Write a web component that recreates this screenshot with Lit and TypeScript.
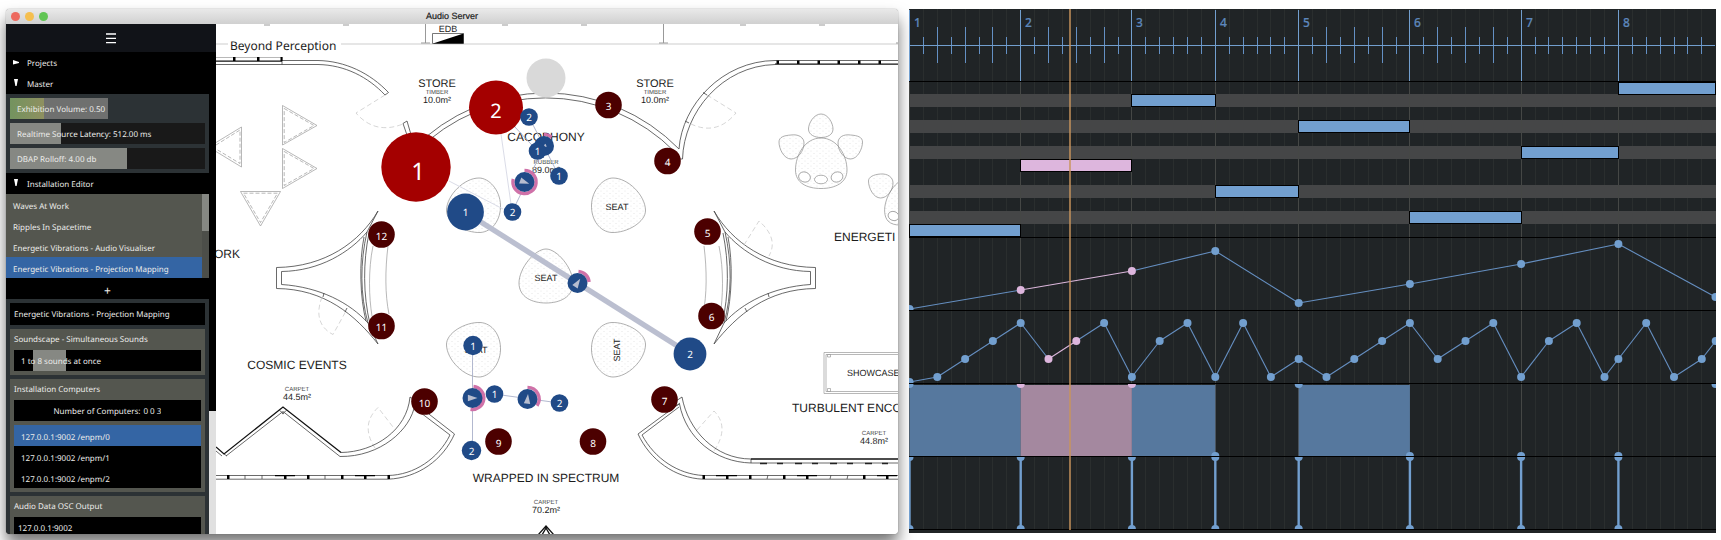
import { LitElement, html, svg, css } from "lit";
import { customElement } from "lit/decorators.js";

/* ---------- side panel ---------- */

@customElement("side-panel")
class SidePanel extends LitElement {
  static styles = css`
    :host {
      display: flex;
      flex-direction: column;
      flex: 0 0 210px;
      min-height: 0;
      background: #000;
      color: #ececea;
      font: 8px/21px "Noto Sans", sans-serif;
      text-rendering: geometricPrecision;
      overflow: hidden;
    }
    * { box-sizing: border-box; }
    button, input { font: inherit; color: inherit; text-rendering: inherit; border: 0; margin: 0; padding: 0; background: none; }
    button { display: block; text-align: left; cursor: pointer; }
    ul { list-style: none; margin: 0; padding: 0; }
    .menu { height: 28px; flex: none; background: #111318; display: grid; place-items: center; width: 100%; }
    .body { display: flex; flex: 1; min-height: 0; }
    .scroll { flex: 1; min-width: 0; overflow: hidden; }
    .rail { width: 7px; display: grid; grid-template-rows: 359fr 123fr; }
    .rail-rest { background: #e0e0e0; }
    .section { width: 100%; height: 21px; display: flex; align-items: center; gap: 8px; padding: 2px 0 0 6px; }
    .section svg { flex: none; margin-bottom: 2px; }
    .panel { background: #2c3235; padding: 4px; display: grid; gap: 4px; }
    .slider { display: grid; height: 21px; }
    .slider > * { grid-area: 1 / 1; }
    .slider input { appearance: none; width: 100%; height: 21px; cursor: pointer;
      background: linear-gradient(90deg, transparent var(--from), #868883 var(--from), #868883 var(--to), transparent var(--to)) #191919; }
    .slider input::-webkit-slider-thumb { appearance: none; width: 1px; height: 21px; }
    .slider span { z-index: 1; padding: 1px 0 0 7px; line-height: 22px; white-space: nowrap; pointer-events: none; }
    .slider.black input { background-color: #000; }
    .slider.level { width: 50%; }
    .slider.level input { background: linear-gradient(90deg, #73935f, #8f9060 35%, #6f706f 35%); }
    .list { display: flex; background: #54564f; }
    .list ul { flex: 1; }
    .list button { width: 100%; height: 21px; padding: 2px 0 0 7px; }
    .track { width: 7px; background: #4c4e49; }
    .thumb { height: 37px; background: #868883; }
    button.on { background: #3465a4; }
    .add { width: 100%; height: 21px; text-align: center; font-size: 12px; padding: 2px 0 0; }
    .field { display: block; width: 100%; height: 22px; background: #000; padding-left: 4px; }
    .group { background: #54564f; padding: 0 4px 4px; }
    .group h3 { margin: 0; font: inherit; height: 21px; }
    .number { display: flex; justify-content: center; gap: 3px; height: 21px; background: #000; margin-bottom: 4px; line-height: 23px; }
    .number input { width: 18px; height: 23px; }
    .hosts { background: #000; }
    .hosts button { width: 100%; height: 21px; padding: 2px 0 0 7px; }
  `;

  slider(text: string, to: number, from = 0, kind = "") {
    return html`<label class="slider ${kind}">
      <input type="range" min="0" max="100" .value=${String(to)} style="--from:${from}%;--to:${to}%" />
      <span>${text}</span>
    </label>`;
  }

  section(text: string, open: boolean) {
    return html`<button class="section" aria-expanded=${open ? "true" : "false"}>
      <svg width="7" height="9" viewBox="0 0 7 9" fill="#fff">
        <path d=${open ? "M2 0H6L4.6 7H3.4Z" : "M1 2L7 4V5L1 6.5Z"} />
      </svg>${text}</button>`;
  }

  render() {
    const presets = ["Waves At Work", "Ripples In Spacetime", "Energetic Vibrations - Audio Visualiser", "Energetic Vibrations - Projection Mapping"];
    const hosts = ["127.0.0.1:9002 /enpm/0", "127.0.0.1:9002 /enpm/1", "127.0.0.1:9002 /enpm/2"];
    return html`
      <button class="menu" aria-label="Menu">
        <svg width="10" height="11" viewBox="0 0 10 11" stroke="#fff" stroke-width="1.3"><path d="M0 1H10M0 5.3H10M0 9.6H10" /></svg>
      </button>
      <div class="body">
        <div class="scroll">
          ${this.section("Projects", false)}
          ${this.section("Master", true)}
          <div class="panel">
            ${this.slider("Exhibition Volume: 0.50", 50, 0, "level")}
            ${this.slider("Realtime Source Latency: 512.00 ms", 26)}
            ${this.slider("DBAP Rolloff: 4.00 db", 60)}
          </div>
          ${this.section("Installation Editor", true)}
          <div class="list">
            <ul>${presets.map((p, i) => html`<li><button class=${i === 3 ? "on" : ""}>${p}</button></li>`)}</ul>
            <div class="track"><div class="thumb"></div></div>
          </div>
          <button class="add" aria-label="Add installation">+</button>
          <div class="panel">
            <input class="field" aria-label="Installation name" .value=${presets[3]} />
            <section class="group">
              <h3>Soundscape - Simultaneous Sounds</h3>
              ${this.slider("1 to 8 sounds at once", 28, 10, "black")}
            </section>
            <section class="group">
              <h3>Installation Computers</h3>
              <label class="number">Number of Computers: <input .value=${"0 0 3"} /></label>
              <ul class="hosts">${hosts.map((h, i) => html`<li><button class=${i === 0 ? "on" : ""}>${h}</button></li>`)}</ul>
            </section>
            <section class="group">
              <h3>Audio Data OSC Output</h3>
              <input class="field" aria-label="OSC output address" .value=${"127.0.0.1:9002"} />
            </section>
          </div>
        </div>
        <div class="rail"><div></div><div class="rail-rest"></div></div>
      </div>
    `;
  }
}

/* ---------- floor plan ---------- */

type Dot = [label: string, x: number, y: number, r: number];

@customElement("floor-plan")
class FloorPlan extends LitElement {
  static styles = css`
    :host { display: block; flex: 1; min-width: 0; background: #fff; overflow: hidden; }
    svg { display: block; width: 100%; height: 100%; text-rendering: geometricPrecision; }
    text { font-family: "Liberation Sans", Arial, sans-serif; fill: #1c1c1c; text-anchor: middle; }
    .room { font-size: 12px; }
    .store { font-size: 11px; }
    .area { font-size: 9px; }
    .floor { font-size: 6px; fill: #444; }
    .left { text-anchor: start; }
    .title { font: 12px "Noto Sans", sans-serif; text-anchor: start; }
    .wall { fill: none; stroke: #444; stroke-width: 0.8; }
    .pale { fill: none; stroke: #9a9a9a; stroke-width: 0.7; }
    .door { fill: none; stroke: #c4c4c4; stroke-width: 0.7; stroke-dasharray: 5 3; }
    .heavy { fill: none; stroke: #111; stroke-width: 1.3; }
    .seat { stroke: #8c8c8c; stroke-width: 0.7; fill: url(#dots); }
    .node { font: 10px "Noto Sans", sans-serif; fill: #fff; }
    .node.l { font-size: 20px; }
    .node.xl { font-size: 24px; }
    .red { fill: #a40000; }
    .speaker { fill: #4c0000; }
    .blue { fill: #204a87; }
    .pink { fill: none; stroke: #cf71a8; stroke-width: 3.4; }
    .aim { fill: #b7bdcf; }
    .link { fill: none; stroke: #a9b0c9; stroke-width: 0.9; }
    .faint { fill: none; stroke: #d6d8e4; stroke-width: 0.9; }
    .beam { stroke: #bbbfd0; stroke-width: 5.4; }
  `;

  dots(list: Dot[], kind: string) {
    const drop = kind === "speaker" ? 5 : 4;
    return list.map(([t, x, y, r]) => svg`<circle class=${kind} cx=${x} cy=${y} r=${r} /><text class="node" x=${x} y=${y + drop}>${t}</text>`);
  }

  /** A moving source: disc, level arc between two compass angles, heading arrow. */
  source(x: number, y: number, from: number, to: number, heading: number, size = 1) {
    const at = (deg: number) => {
      const a = ((deg - 90) * Math.PI) / 180;
      return `${(x + 11.6 * Math.cos(a)).toFixed(1)} ${(y + 11.6 * Math.sin(a)).toFixed(1)}`;
    };
    return svg`
      <path class="pink" d="M${at(from)}A11.6 11.6 0 ${to - from > 180 ? 1 : 0} 1 ${at(to)}" />
      <circle class="blue" cx=${x} cy=${y} r="10" />
      <path class="aim" d="M5 0L-4.6 3.2V-3.2Z" transform="translate(${x} ${y}) rotate(${heading}) scale(${size})" />`;
  }

  label(x: number, y: number, floor: string, area: string) {
    return svg`<text class="floor" x=${x} y=${y}>${floor}</text><text class="area" x=${x} y=${y + 9}>${area}</text>`;
  }

  wing() {
    return svg`
      <path class="wall" d="M378 211C360 242 325 267 276.500 267.500V288.500C325 289 355 315 378 344L368 323M378 211L367 232C350 252 320 271 281.500 271.500V284.500C320 287 350 303 368 323" />
      <path class="wall" d="M367 232C360 262 360 295 368 323M369 233C363 262 363 295 370 324M364 237C359 262 360 298 366 321M324 293L323 297M347 308L345 312" />
      <path class="pale" d="M373 246C368 270 369 298 372 316M388 246C385 270 385 295 389 314" />`;
  }

  render() {
    const corner = "M613 178C628 178 645 195 645.5 210C646 222 627 233 612 232.500C600 232 591 220 591.500 205C592 190 603 178 613 178Z";
    return html`<svg viewBox="216 24 682 510" preserveAspectRatio="xMinYMin slice" role="img" aria-label="Floor plan">
      <defs>
        <pattern id="dots" width="6" height="5" patternUnits="userSpaceOnUse">
          <circle cx="1" cy="1" r="0.5" fill="#ddd" /><circle cx="4" cy="3.500" r="0.5" fill="#ddd" />
        </pattern>
      </defs>

      <path d="M216 44H898" stroke="#e6e6e6" stroke-width="2" />
      <path stroke="#999" fill="none" d="M264 25H270M343 25H349M502 25H508M581 25H587M740 25H746M819 25H825M425.500 24V43M421 43H430M663.500 24V43M659 43H668M896 43H898" />
      <path d="M432.500 33.500H463.500V43.500H432.500Z" fill="#fff" stroke="#555" stroke-width="0.8" />
      <path d="M433 43.500L463.500 33.500V43.500Z" />
      <text class="area" x="448" y="32">EDB</text>
      <rect x="228" y="40" width="113" height="14" fill="#fff" />
      <text class="title" x="230" y="50">Beyond Perception</text>

      <path class="wall" d="M282 60.500H318C345 61 370 73 388.500 92.500L385 95C368 77 345 65 318 64.500H216M282 57V64.500" />
      <path class="pale" d="M216 57.500H282" />
      <path class="heavy" d="M216 61.200H282" />
      <path d="M233 57h2.500v4h-2.500zM257 57h2.500v4h-2.500zM280.500 57h2v4h-2zM776.500 60h2.500v4h-2.500zM797 60h2.500v4h-2.500zM817.500 60h2.500v4h-2.500zM837.500 60h2.500v4h-2.500zM858 60h2.500v4h-2.500zM878.500 60h2.500v4h-2.500z" />
      <path class="door" d="M385 95L356 113Q375 135 403 124M707 95L736 113Q716 137 689 123" />
      <path class="wall" d="M403 123.500L407 121L412 138M403 123.500L408 138" />
      <path class="wall" d="M413 149A186 186 0 0 1 679 149M416 152A182 182 0 0 1 675 152" />
      <path class="wall" d="M679 149C682 105 722 61 775 60.500H898M682.500 159C684 112 722 66 775 64.500M703 92.500L707 95M685 121L689 123M682.500 159L679 159" />
      <path class="heavy" d="M775 64.200H898" />

      <g class="pale">
        <path d="M216 142.500L241.500 127V167L216 151.500M282.500 105.500L317 125.500L282.500 145ZM282.500 148.500L317 168.500L282.500 188.500ZM240.500 191.500H280.500L260.500 226Z" />
        <path stroke-dasharray="4 2" d="M216 145L240 130V163.500L216 149M284.200 108.500L314 125.500L284.200 142.500ZM284.200 151.500L314 168.500L284.200 185.500ZM243.500 193.200H277.500L260.500 222.500Z" />
      </g>

      ${this.wing()}
      <g transform="translate(1092 0) scale(-1 1)">${this.wing()}</g>
      <path class="door" d="M322 297C315 315 320 328 333 334.500L346 311M744 245L759 221C775 235 774 247 769 256M375 448Q360 425 378 407.500L393 427M697 430L714 411Q730 427 714 451" />

      <path class="seat" d=${corner} />
      <path class="seat" d=${corner} transform="translate(1092 0) scale(-1 1)" />
      <path class="seat" d=${corner} transform="translate(0 555) scale(1 -1)" />
      <path class="seat" d=${corner} transform="translate(1092 555) scale(-1 -1)" />
      <path class="seat" d="M546 249C557 249 573 268 573 283C573 297 560 303 546 303C532 303 519 297 519 283C519 268 535 249 546 249Z" />

      <g class="seat">
        <path d="M821 138C837 138 847 155 847 170C847 183 835 188.500 821 188.500C807 188.500 795.500 183 795.500 170C795.500 155 805 138 821 138Z" />
        <path d="M821 114C828 114 833 123 833 129C833 135 827 137.500 821 137.500C815 137.500 808.500 135 808.500 129C808.500 123 814 114 821 114Z" />
        <path d="M791 135C798 134 804 137 804 143C804 151 798 159 791 159C784 159 779 149 779 142C779 137 784 135.500 791 135Z" />
        <path d="M850.500 135C843.500 134 838 137 838 143C838 151 844 159 850.500 159C857.500 159 862.500 149 862.500 142C862.500 137 857.500 135.500 850.500 135Z" />
        <path d="M880.500 174C887.500 173.500 893 177 893 183C893 190 887.500 198 880.500 198C873.500 198 868.500 188 868.500 181C868.500 177 873.500 174.500 880.500 174Z" />
        <path d="M900 181C887 190 880 212 888 221C891 224 895 225 900 225Z" />
        <g fill="#fff">
          <ellipse cx="804.500" cy="177" rx="6" ry="5" transform="rotate(20 804.500 177)" />
          <ellipse cx="821" cy="179.500" rx="6.500" ry="4.300" />
          <ellipse cx="837" cy="177" rx="6" ry="5" transform="rotate(-20 837 177)" />
          <ellipse cx="893.500" cy="216" rx="5.500" ry="4.500" transform="rotate(20 893.500 216)" />
        </g>
      </g>

      <path class="pale" d="M900 352.500H824V393.500H900M900 354.500H826V391.500H900M827.500 354.500h3v2.500h-3zM827.500 388.500h3v3h-3z" />

      <path class="heavy" d="M216 447L224 454L283 407L341 452.500" />
      <path class="wall" d="M216 451L222 456M226 456L283 411.500L340 456.500M224 454L227 456M279 410L284 414M287 410L282 414M341 452.500C375 452 407 430 410 397L413 399M340 456.500C380 457 411 430 415 404" />
      <path class="wall" d="M425 411L454.500 434C443 460 418 478 388 479.200H216M421 413L450 435C438 459 414 475 388 475.500H216" />
      <path d="M227 475h2.500v4h-2.500zM284 475h2.500v4h-2.500zM307 475h2.500v4h-2.500zM341 475h2.500v4h-2.500zM364 475h2.500v4h-2.500zM387.500 475h2.500v4h-2.500zM275 475h20v1.200h-20zM355 475h20v1.200h-20z" />
      <path class="wall" d="M245 475V479M262 475V479M325 475V479" />

      <path class="wall" d="M676 401L682 397C688 430 715 459 751 459M676 406L679.500 404C686 438 715 462 751 463H898M751 459V463" />
      <path class="heavy" d="M751 459H898" />
      <path class="wall" d="M680 403L638 434C650 460 675 478 703 479.200H898M679 407L642 435C655 459 678 474 703 475.500H898" />
      <path d="M702.500 475h2.500v4h-2.500zM726 475h2.500v4h-2.500zM749 475h2.500v4h-2.500zM783 475h2.500v4h-2.500zM806 475h2.500v4h-2.500zM863 475h2.500v4h-2.500zM886 475h2.500v4h-2.500zM716 475h21v1.200h-21zM797 475h20v1.200h-20zM877 475h20v1.200h-20z" />
      <path stroke="#222" stroke-width="1.500" stroke-dasharray="7 10 6 12" d="M760 463.500H898" />
      <path class="wall" d="M767 479L768 475M830 479L831 475M847 479L848 475" />
      <path class="heavy" d="M538 535L546 526L554 535M542 535L546 528L550 535" />

      <text class="store" x="437" y="87">STORE</text>${this.label(437, 94, "TIMBER", "10.0m²")}
      <text class="store" x="655" y="87">STORE</text>${this.label(655, 94, "TIMBER", "10.0m²")}
      <text class="room" x="546" y="141">CACOPHONY</text>${this.label(546, 164, "RUBBER", "89.0m²")}
      <text class="room left" x="214" y="258">ORK</text>
      <text class="room left" x="834" y="241">ENERGETI</text>
      <text class="room" x="297" y="369">COSMIC EVENTS</text>${this.label(297, 391, "CARPET", "44.5m²")}
      <text class="room" x="546" y="482">WRAPPED IN SPECTRUM</text>${this.label(546, 504, "CARPET", "70.2m²")}
      <text class="room left" x="792" y="412">TURBULENT ENCO</text>${this.label(874, 435, "CARPET", "44.8m²")}
      <text class="area left" x="847" y="376">SHOWCASE</text>
      <text class="area" x="617" y="210">SEAT</text>
      <text class="area" x="546" y="281">SEAT</text>
      <text class="area" x="476" y="353">SEAT</text>
      <text class="area" transform="translate(620 350) rotate(-90)">SEAT</text>

      <circle cx="546" cy="78" r="19.500" fill="#d9d9d9" />
      <path class="faint" d="M449 181L503 209M501 134L511 204" />
      <path class="link" d="M514 126L544 158M529 117L559 176M544 147L512 212M472.500 345V450M494 394L559.500 403" />
      <path class="beam" d="M465 212L690 354" />

      <circle class="red" cx="416" cy="167" r="34.700" /><text class="node xl" x="418" y="180">1</text>
      <circle class="red" cx="496" cy="107.500" r="27" /><text class="node l" x="496" y="118">2</text>
      ${this.dots([["3", 608.5, 105, 13.3], ["4", 667.5, 161, 13.3], ["5", 707.5, 231.5, 13.3], ["6", 711.5, 316, 13.3], ["7", 664.5, 399.5, 13.3], ["8", 593, 441.5, 13.3], ["9", 498.5, 441.5, 13.3], ["10", 424.5, 401.5, 13.3], ["11", 381.5, 326, 13.3], ["12", 381.5, 234.5, 13.3]], "speaker")}
      ${this.source(524.5, 182, 0, 285, 20)}
      ${this.source(544, 146, 0, 40, 160, 0.5)}
      ${this.source(577.5, 283, 5, 85, -57)}
      ${this.source(472.5, 398, 5, 190, 0)}
      ${this.source(527.5, 399, 0, 125, -84)}
      ${this.dots([["1", 465.5, 212, 18.4], ["2", 690, 354, 16.4], ["2", 529, 117, 8.8], ["1", 537.5, 151, 8.8], ["1", 559, 176, 8.8], ["2", 512.5, 212, 8.8], ["1", 473, 345.5, 9.7], ["2", 471.5, 450.5, 9.7], ["1", 494.5, 394, 8.8], ["2", 559.5, 403, 8.8]], "blue")}
    </svg>`;
  }
}

/* ---------- timeline ---------- */

const UNIT = 13.9;
const START = 909.5;
const BARS = [8, 8, 6, 6, 8, 8, 7, 7];
const BAR_X = BARS.map((_, i) => START + UNIT * BARS.slice(0, i).reduce((a, b) => a + b, 0));
const END = 1715.5;
const barEnd = (i: number) => BAR_X[i + 1] ?? END;
const rowTop = (r: number) => Math.floor(82 + r * 12.95);

type Point = [x: number, y: number, picked?: boolean];

@customElement("time-line")
class TimeLine extends LitElement {
  static styles = css`
    :host {
      display: grid;
      grid-template-rows: 73fr 156fr 73fr 73fr 73fr 73fr 3fr;
      margin-bottom: 1px;
      min-width: 0;
      min-height: 0;
      background: #202426;
      position: relative;
      overflow: hidden;
    }
    svg { display: block; width: 100%; height: 100%; min-height: 0; }
    text { font: 500 12px "Noto Sans", sans-serif; fill: #5d87bb; stroke: #5d87bb; stroke-width: 0.2px; }
    .sub { stroke: #2a2e2e; }
    .bar { stroke: #454745; }
    .tick { stroke: #6490c4; }
    .axis { stroke: #729fcf; }
    .edge { stroke: #000; }
    .head { stroke: #c9955c; stroke-width: 2; opacity: 0.72; }
    .line { stroke: #658fc1; stroke-width: 1.1; }
    .line.on { stroke: #dbb6db; }
    .dot, .note { fill: #729fcf; }
    .dot.on, .note.on { fill: #ddb6dd; }
    .note { stroke: #000; }
    .stripe { fill: #454647; }
    .block { fill: #56789e; }
    .block.on { fill: #a4889f; }
    .pulse { stroke: #729fcf; stroke-width: 2.4; }
  `;

  lane(top: number, height: number, content: unknown, grid = true) {
    const bottom = top + height;
    return html`<svg viewBox="909 ${top} 807 ${height}" preserveAspectRatio="xMinYMin slice" aria-hidden="true">
      ${BAR_X.map((x, i) => Array.from({ length: BARS[i] }, (_, k) =>
        svg`<path class=${k || !grid ? "sub" : "bar"} d="M${Math.floor(x + k * UNIT) + 0.5} ${top}V${bottom}" />`))}
      ${content}
      <path class="edge" d="M909 ${bottom - 0.5}H1716" />
      <path class="head" d="M1070 ${top}V${bottom}" />
    </svg>`;
  }

  ruler() {
    return svg`
      ${BAR_X.map((x, i) => svg`
        ${Array.from({ length: BARS[i] }, (_, k) => {
          const px = Math.floor(x + k * UNIT) + 0.5;
          const span = k === 0 ? "10V81" : BARS[i] === 8 && k % 2 === 0 ? "27V63" : "37V54";
          return svg`<path class=${k ? "tick" : "axis"} d="M${px} ${span}" />`;
        })}
        <text x=${Math.floor(x) + 5} y="27">${i + 1}</text>`)}
      <path class="axis" d="M909 45.500H1715" />`;
  }

  notes() {
    const rows = [11, 6, 1, 8, 3, 10, 5, 0];
    return svg`
      ${[1, 3, 5, 8, 10].map((r) => svg`<rect class="stripe" x="909" y=${rowTop(r)} width="807" height=${rowTop(r + 1) - rowTop(r)} />`)}
      ${BAR_X.map((x) => svg`<path class="bar" stroke-opacity="0.9" d="M${Math.floor(x) + 0.5} 82V237" />`)}
      ${rows.map((r, i) => svg`<rect class="note ${i === 1 ? "on" : ""}" x=${Math.floor(BAR_X[i]) + 0.5} y=${rowTop(r) + 0.5}
        width=${Math.floor(barEnd(i)) - Math.floor(BAR_X[i])} height="12" />`)}`;
  }

  curve(points: Point[]) {
    return svg`
      ${points.slice(1).map((p, i) => {
        const q = points[i];
        return svg`<path class="line ${p[2] && q[2] ? "on" : ""}" d="M${q[0]} ${q[1]}L${p[0]} ${p[1]}" />`;
      })}
      ${points.map(([x, y, on]) => svg`<circle class="dot ${on ? "on" : ""}" cx=${x} cy=${y} r="4" />`)}`;
  }

  blocks() {
    const marks: Point[] = [[BAR_X[0], 384], [BAR_X[1], 384, true], [BAR_X[2], 384, true], [BAR_X[4], 384], [END, 384], [BAR_X[3], 456], [BAR_X[5], 456], [BAR_X[6], 456], [BAR_X[7], 456]];
    return svg`
      ${[0, 1, 2, 4].map((i) => svg`<rect class="block ${i === 1 ? "on" : ""}" x=${BAR_X[i]} y="385" width=${barEnd(i) - BAR_X[i]} height="71" />`)}
      ${marks.map(([x, y, on]) => svg`<circle class="dot ${on ? "on" : ""}" cx=${x} cy=${y} r="4" />`)}`;
  }

  pulses() {
    return BAR_X.map((x) => svg`<path class="pulse" d="M${x} 457V529" />
      <circle class="dot" cx=${x} cy="457" r="4" /><circle class="dot" cx=${x} cy="529" r="4" />`);
  }

  render() {
    const slow: Point[] = [309, 290, 271, 251, 303, 284, 264, 244].map((y, i) => [BAR_X[i], y, i === 1 || i === 2]);
    slow.push([END, 297]);
    const high = 323, mid = 341, low = 359, base = 377;
    const beats: [number, number][] = [
      [0, 382], [2, base], [4, low], [6, mid], [8, high], [10, low], [12, mid], [14, high], [16, base], [18, mid], [20, high],
      [22, base], [24, high], [26, base], [28, low], [30, base], [32, low], [34, mid], [36, high], [38, low], [40, mid],
      [42, high], [44, base], [46, mid], [48, high], [50, base], [51, low], [53, high], [55, base], [57, low], [58, mid],
    ];
    const fast: Point[] = beats.map(([u, y]) => [START + u * UNIT, y, u === 10 || u === 12]);
    return html`
      ${this.lane(9, 73, this.ruler(), false)}
      ${this.lane(82, 156, this.notes())}
      ${this.lane(238, 73, this.curve(slow))}
      ${this.lane(311, 73, this.curve(fast))}
      ${this.lane(384, 73, this.blocks())}
      ${this.lane(457, 73, this.pulses())}
      <div></div>
    `;
  }
}

/* ---------- page ---------- */

@customElement("app-root")
class AppRoot extends LitElement {
  static styles = css`
    :host {
      display: grid;
      grid-template-columns: 892fr 807fr;
      gap: 11px;
      box-sizing: border-box;
      height: 100vh;
      min-height: 320px;
      padding: 9px 5px 6px 6px;
      background: #fff;
      overflow: hidden;
    }
    .window {
      display: flex;
      flex-direction: column;
      min-width: 0;
      min-height: 0;
      border-radius: 4px;
      box-shadow: 0 0 1px #555, 0 10px 16px rgba(0, 0, 0, 0.55);
    }
    .titlebar {
      flex: none;
      display: grid;
      grid-template-columns: 1fr auto 1fr;
      align-items: center;
      height: 15px;
      padding: 0 5px;
      border-radius: 4px 4px 0 0;
      background: linear-gradient(#e9e9e9, #d0d0d0);
    }
    .lights { display: flex; gap: 5px; }
    .lights button { width: 9px; height: 9px; padding: 0; border: 0; border-radius: 50%; }
    .close { background: #ed6a5f; }
    .minimise { background: #f5bf4f; }
    .zoom { background: #61c554; }
    h1 { margin: 0; font: 500 9px/15px "Liberation Sans", Arial, sans-serif; text-rendering: geometricPrecision; color: #1a1a1a; -webkit-text-stroke: 0.2px; }
    .content { display: flex; flex: 1; min-height: 0; border-radius: 0 0 4px 4px; overflow: hidden; }
  `;

  render() {
    return html`
      <main class="window">
        <header class="titlebar">
          <div class="lights">
            <button class="close" aria-label="Close"></button>
            <button class="minimise" aria-label="Minimise"></button>
            <button class="zoom" aria-label="Zoom"></button>
          </div>
          <h1>Audio Server</h1>
        </header>
        <div class="content">
          <side-panel></side-panel>
          <floor-plan></floor-plan>
        </div>
      </main>
      <time-line></time-line>
    `;
  }
}
